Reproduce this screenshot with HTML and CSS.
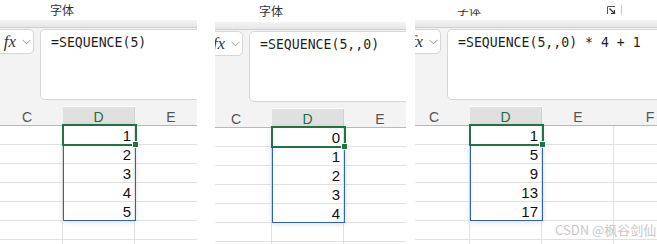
FILE: index.html
```html
<!DOCTYPE html>
<html lang="zh-CN">
<head>
    <meta charset="UTF-8">
    <title>SEQUENCE</title>
    <link rel="stylesheet" href="styles.css">
</head>
<body>
    <div class="shot">
        <!-- =SEQUENCE(5) -->
        <section class="panel p1">
            <div class="inner">
                <div class="ribbon"><span class="group-label">字体</span></div>
                <div class="bar"></div>
                <div class="formula-row">
                    <div class="fx-box">
                        <span class="fx">fx</span>
                        <svg class="chev" width="9" height="6" viewBox="0 0 9 6"><polyline points="0.5,0.8 4.5,4.8 8.5,0.8" fill="none" stroke="#9a9a9a" stroke-width="1"/></svg>
                    </div>
                    <div class="formula">=SEQUENCE(5)</div>
                </div>
                <div class="sheet">
                    <div class="hdr">C</div><div class="hdr sel">D</div><div class="hdr">E</div><div class="hdr">F</div>
                    <div class="cell"></div><div class="cell num">1</div><div class="cell"></div><div class="cell"></div>
                    <div class="cell"></div><div class="cell num">2</div><div class="cell"></div><div class="cell"></div>
                    <div class="cell"></div><div class="cell num">3</div><div class="cell"></div><div class="cell"></div>
                    <div class="cell"></div><div class="cell num">4</div><div class="cell"></div><div class="cell"></div>
                    <div class="cell"></div><div class="cell num">5</div><div class="cell"></div><div class="cell"></div>
                    <div class="cell"></div><div class="cell"></div><div class="cell"></div><div class="cell"></div>
                    <div class="cell"></div><div class="cell"></div><div class="cell"></div><div class="cell"></div>
                    <div class="spill"></div>
                    <div class="active"><span class="handle"></span></div>
                </div>
            </div>
        </section>

        <!-- =SEQUENCE(5,,0) -->
        <section class="panel p2">
            <div class="inner">
                <div class="ribbon"><span class="group-label">字体</span></div>
                <div class="bar"></div>
                <div class="formula-row">
                    <div class="fx-box">
                        <span class="fx">fx</span>
                        <svg class="chev" width="9" height="6" viewBox="0 0 9 6"><polyline points="0.5,0.8 4.5,4.8 8.5,0.8" fill="none" stroke="#9a9a9a" stroke-width="1"/></svg>
                    </div>
                    <div class="formula">=SEQUENCE(5,,0)</div>
                </div>
                <div class="sheet">
                    <div class="hdr">C</div><div class="hdr sel">D</div><div class="hdr">E</div><div class="hdr">F</div>
                    <div class="cell"></div><div class="cell num">0</div><div class="cell"></div><div class="cell"></div>
                    <div class="cell"></div><div class="cell num">1</div><div class="cell"></div><div class="cell"></div>
                    <div class="cell"></div><div class="cell num">2</div><div class="cell"></div><div class="cell"></div>
                    <div class="cell"></div><div class="cell num">3</div><div class="cell"></div><div class="cell"></div>
                    <div class="cell"></div><div class="cell num">4</div><div class="cell"></div><div class="cell"></div>
                    <div class="cell"></div><div class="cell"></div><div class="cell"></div><div class="cell"></div>
                    <div class="cell"></div><div class="cell"></div><div class="cell"></div><div class="cell"></div>
                    <div class="spill"></div>
                    <div class="active"><span class="handle"></span></div>
                </div>
            </div>
        </section>

        <!-- =SEQUENCE(5,,0) * 4 + 1 -->
        <section class="panel p3">
            <div class="inner">
                <div class="ribbon">
                    <span class="group-label">字体</span>
                    <span class="launcher">
                        <svg width="9" height="9" viewBox="0 0 9 9"><polyline points="0.5,8 0.5,0.5 8,0.5" fill="none" stroke="#555" stroke-width="1"/><polyline points="2.5,2.5 7.5,7.5" stroke="#333" stroke-width="1.2"/><polyline points="4,7.5 7.5,7.5 7.5,4" fill="none" stroke="#333" stroke-width="1.2"/></svg>
                    </span>
                    <span class="divider"></span>
                </div>
                <div class="bar"></div>
                <div class="formula-row">
                    <div class="fx-box">
                        <span class="fx">fx</span>
                        <svg class="chev" width="9" height="6" viewBox="0 0 9 6"><polyline points="0.5,0.8 4.5,4.8 8.5,0.8" fill="none" stroke="#9a9a9a" stroke-width="1"/></svg>
                    </div>
                    <div class="formula">=SEQUENCE(5,,0) * 4 + 1</div>
                </div>
                <div class="sheet">
                    <div class="hdr">C</div><div class="hdr sel">D</div><div class="hdr">E</div><div class="hdr">F</div>
                    <div class="cell"></div><div class="cell num">1</div><div class="cell"></div><div class="cell"></div>
                    <div class="cell"></div><div class="cell num">5</div><div class="cell"></div><div class="cell"></div>
                    <div class="cell"></div><div class="cell num">9</div><div class="cell"></div><div class="cell"></div>
                    <div class="cell"></div><div class="cell num">13</div><div class="cell"></div><div class="cell"></div>
                    <div class="cell"></div><div class="cell num">17</div><div class="cell"></div><div class="cell"></div>
                    <div class="cell"></div><div class="cell"></div><div class="cell"></div><div class="cell"></div>
                    <div class="cell"></div><div class="cell"></div><div class="cell"></div><div class="cell"></div>
                    <div class="spill"></div>
                    <div class="active"><span class="handle"></span></div>
                </div>
            </div>
            <div class="watermark">CSDN @枫谷剑仙</div>
        </section>
    </div>
</body>
</html>
```

FILE: styles.css
```css
html, body {
    margin: 0;
    padding: 0;
    background: #ffffff;
}
body {
    font-family: "Liberation Sans", "Noto Sans CJK SC", sans-serif;
    color: #222;
}
.shot {
    display: flex;
    width: 657px;
    height: 244px;
    overflow: hidden;
}
.panel {
    position: relative;
    height: 244px;
    overflow: hidden;
    flex: none;
}
.p1 { width: 197px; }
.p2 { width: 191px; margin-left: 18px; }
.p3 { width: 242px; margin-left: 9px; }

.inner {
    width: 320px;
}
.p2 .inner { margin-left: -6px; }
.p3 .inner { margin-left: -8px; }

/* ribbon strip */
.ribbon {
    height: 20px;
    display: flex;
    align-items: center;
    background: #fff;
}
.p2 .ribbon { height: 22px; }
.group-label {
    margin-left: 50px;
    font-family: "Noto Sans CJK SC", sans-serif;
    font-size: 12px;
    line-height: 14px;
    color: #333;
}
.p3 .group-label {
    clip-path: inset(45% 0 0 0);
}
.launcher {
    margin-left: 126px;
    display: flex;
    width: 9px;
    height: 9px;
}
.divider {
    margin-left: 5px;
    width: 1px;
    height: 10px;
    background: #c8c8c8;
}

.bar {
    height: 7px;
    background: linear-gradient(#f4f4f4, #e6e6e6);
    border-bottom: 1px solid #cfcfcf;
}

/* formula bar */
.formula-row {
    display: flex;
    align-items: flex-start;
    gap: 6px;
    height: 78px;
    padding-top: 1px;
    box-sizing: border-box;
    background: #f3f3f3;
}
.fx-box {
    margin-left: -10px;
    width: 44px;
    height: 25px;
    box-sizing: border-box;
    display: flex;
    align-items: center;
    justify-content: flex-end;
    gap: 6px;
    padding-right: 2px;
    background: #fff;
    border: 1px solid #d6d6d6;
    border-radius: 5px;
}
.fx {
    font-family: "Liberation Serif", serif;
    font-style: italic;
    font-size: 17px;
    color: #333;
    line-height: 18px;
}
.chev {
    margin-top: 1px;
}
.formula {
    flex: 1;
    height: 71px;
    box-sizing: border-box;
    padding: 5px 0 0 10px;
    background: #fff;
    border: 1px solid #d6d6d6;
    border-radius: 5px;
    font-family: "DejaVu Sans Mono", monospace;
    font-size: 13.2px;
    line-height: 16px;
    color: #1f1f1f;
    white-space: nowrap;
}

/* worksheet */
.sheet {
    position: relative;
    margin-left: -9px;
    display: grid;
    grid-template-columns: repeat(4, 72px);
    grid-template-rows: 20px repeat(7, 19px);
}
.hdr {
    background: #f3f3f3;
    border-bottom: 1px solid #b8b8b8;
    text-align: center;
    font-size: 14px;
    line-height: 22px;
    color: #555;
}
.hdr.sel {
    background: #e0e0e0;
    color: #1e6e45;
    margin-top: 1px;
    border-right: 1px solid #d0d0d0;
    line-height: 21px;
}
.cell {
    border-bottom: 1px solid #e1e1e1;
    border-right: 1px solid #e1e1e1;
    box-sizing: border-box;
}
.cell.num {
    text-align: right;
    padding-right: 3px;
    font-size: 15px;
    line-height: 19px;
    color: #111;
}

.spill {
    position: absolute;
    left: 72px;
    top: 19px;
    width: 73px;
    height: 96px;
    box-sizing: border-box;
    border: 1px solid #2a62c9;
    box-shadow: 0 1px 6px rgba(0, 0, 0, 0.12);
}
.active {
    position: absolute;
    left: 71px;
    top: 18px;
    width: 75px;
    height: 22px;
    box-sizing: border-box;
    border: 2px solid #217346;
}
.handle {
    position: absolute;
    right: -4px;
    bottom: -4px;
    width: 5px;
    height: 5px;
    background: #217346;
    border: 1px solid #fff;
}

.watermark {
    position: absolute;
    left: 140px;
    top: 222px;
    font-family: "Noto Sans CJK SC", sans-serif;
    font-size: 13px;
    line-height: 16px;
    color: #c9c9c9;
    white-space: nowrap;
}
```
